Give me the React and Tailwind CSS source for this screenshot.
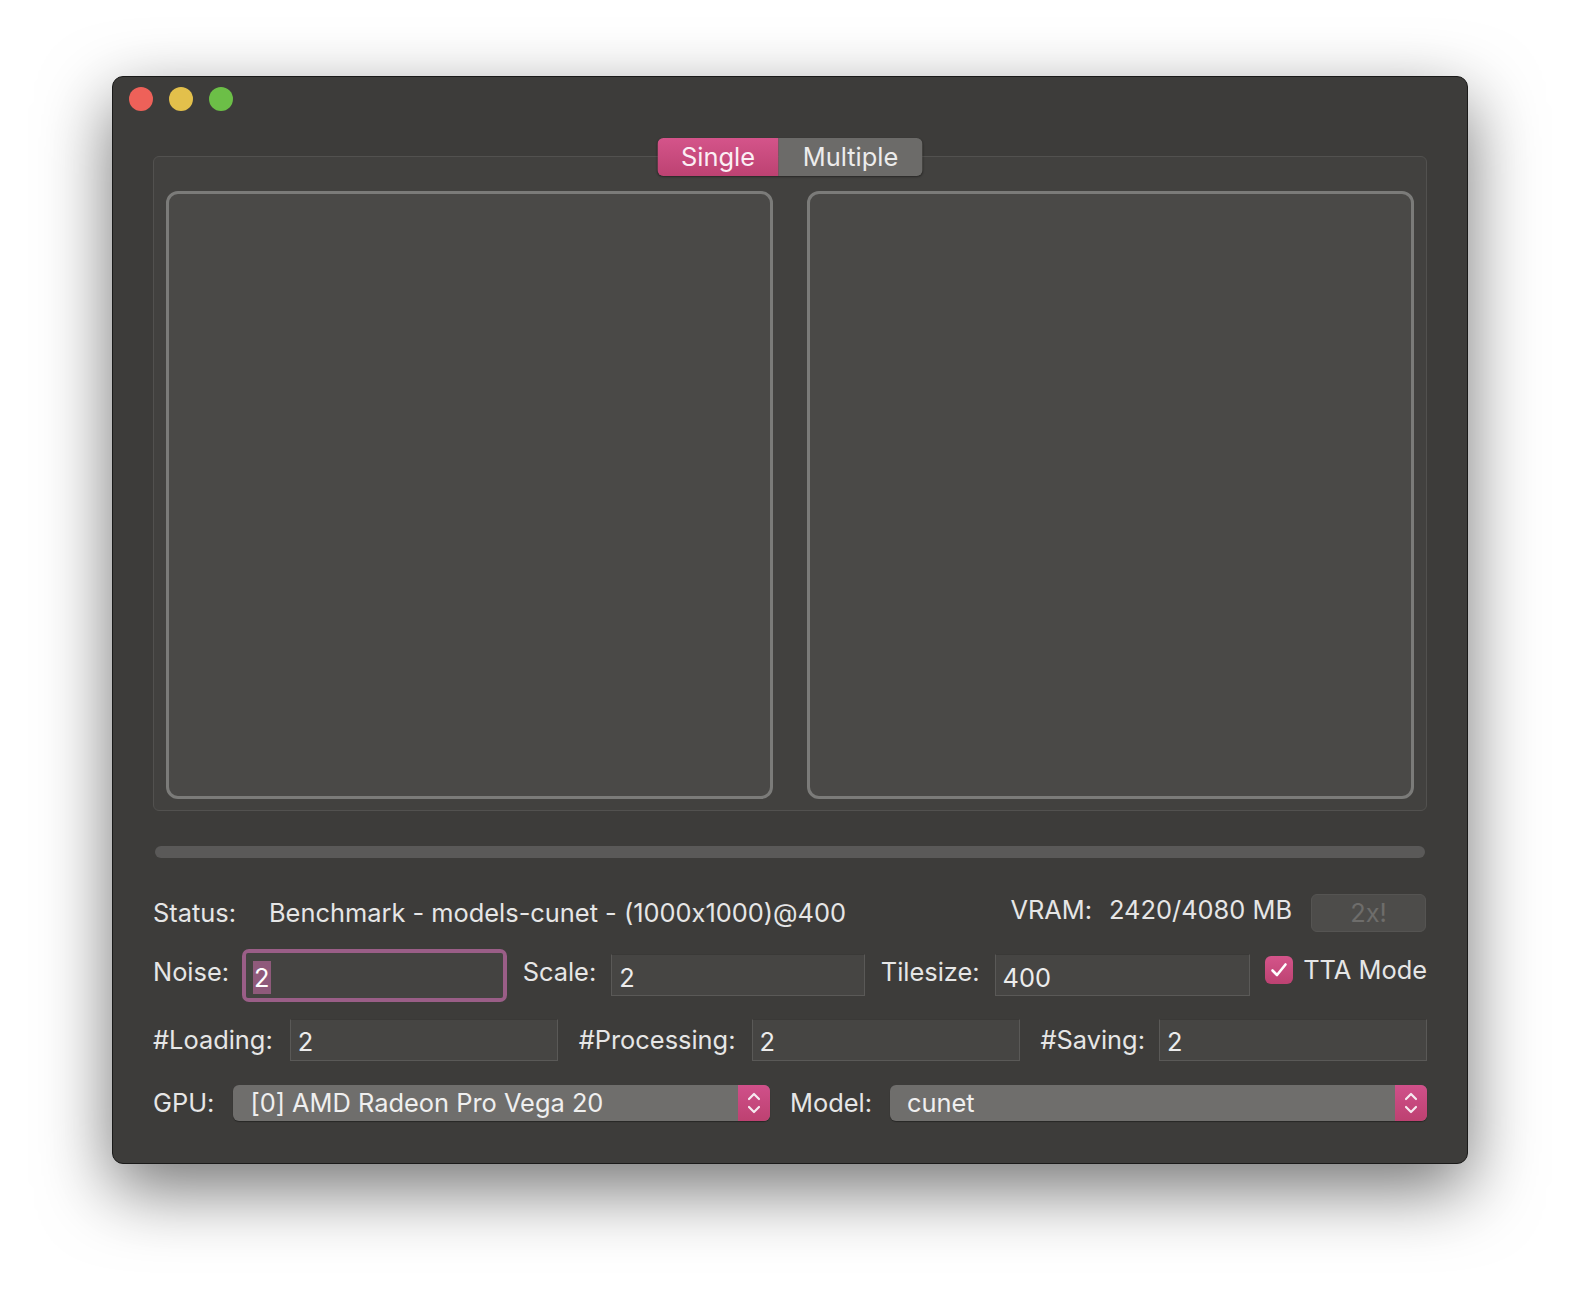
import React from 'react';

const Field = ({ value, width, focused }) => {
  if (focused) {
    return (
      <div className={`${width} h-[53px] rounded-[7px] bg-[#9a5e87] p-[4px]`}>
        <div className="h-full w-full bg-[#444341] rounded-[2px] flex items-center pl-[7px] pt-[4px]">
          <span className="bg-[#8f5a7b] text-white px-[1px] leading-[33px]">{value}</span>
        </div>
      </div>
    );
  }
  return (
    <div className={`${width} h-[42px] bg-[#464543] border border-[#5a5957] border-t-[#3a3937] flex items-center pl-[7px] pt-[6px] text-[#ececec]`}>
      {value}
    </div>
  );
};

const Combo = ({ value }) => (
  <div className="w-[537px] h-[36px] rounded-[6px] bg-[#6f6e6c] flex items-stretch shadow-[0_1px_1px_rgba(0,0,0,0.35)] overflow-hidden">
    <div className="flex-1 flex items-center pl-[17px] text-[#efefef]">{value}</div>
    <div className="w-[32px] bg-gradient-to-b from-[#d0508a] to-[#bd4171] flex items-center justify-center">
      <svg width="14" height="26" viewBox="0 0 14 26" fill="none" stroke="#f6e9f0" strokeWidth="2.2" strokeLinecap="round" strokeLinejoin="round">
        <path d="M2 9 L7 4 L12 9" />
        <path d="M2 17 L7 22 L12 17" />
      </svg>
    </div>
  </div>
);

export default function App() {
  return (
    <div className="min-h-[1312px] w-[1580px] bg-white pl-[112px] pt-[76px] font-['Inter','Liberation_Sans',sans-serif] [font-feature-settings:'calt'_0]">
      <div className="w-[1356px] h-[1088px] bg-[#3d3c3a] rounded-[11px] border border-[#1a1a19] shadow-[0_25px_70px_rgba(0,0,0,0.55)] flex flex-col text-[25.4px] text-[#e6e6e6]">
        {/* title bar */}
        <div className="h-[79px] flex gap-[16px] pl-[16px] pt-[10px]">
          <div className="w-[24px] h-[24px] rounded-full bg-[#ee6159]" />
          <div className="w-[24px] h-[24px] rounded-full bg-[#e3c04b]" />
          <div className="w-[24px] h-[24px] rounded-full bg-[#6cbf47]" />
        </div>

        <div className="px-[40px] flex flex-col">
          {/* group box */}
          <div className="relative h-[655px] rounded-[6px] border border-[#52514f] bg-[#42413f] flex gap-[34px] pt-[34px] px-[12px] pb-[11px]">
            <div className="absolute left-1/2 top-0 -translate-x-1/2 -translate-y-1/2 flex h-[38px] rounded-[6px] overflow-hidden shadow-[0_1px_2px_rgba(0,0,0,0.4)]">
              <div className="w-[121px] bg-gradient-to-b from-[#d4548a] to-[#bd4272] text-[#fbeef4] flex items-center justify-center">Single</div>
              <div className="w-[144px] bg-[#6c6b69] text-[#ececec] flex items-center justify-center">Multiple</div>
            </div>
            <div className="flex-1 rounded-[12px] border-[3px] border-[#7b7b79] bg-[#4a4947]" />
            <div className="flex-1 rounded-[12px] border-[3px] border-[#7b7b79] bg-[#4a4947]" />
          </div>

          {/* progress */}
          <div className="mt-[35px] mx-[2px] h-[12px] rounded-full bg-[#5a5958]" />

          {/* status */}
          <div className="mt-[36px] h-[38px] flex items-center justify-between">
            <div className="flex items-center">
              <span className="w-[116px]">Status:</span>
              <span>Benchmark - models-cunet - (1000x1000)@400</span>
            </div>
            <div className="flex items-center">
              <span className="mr-[17px] -mt-[6px]">VRAM:</span>
              <span className="-mt-[6px]">2420/4080 MB</span>
              <div className="ml-[19px] mr-[1px] w-[115px] h-[38px] rounded-[6px] bg-[#4d4c4a] border border-[#555452] text-[#6e6d6b] flex items-center justify-center">2x!</div>
            </div>
          </div>

          {/* noise row */}
          <div className="mt-[17px] h-[53px] flex items-center justify-between">
            <div className="flex items-center gap-[13px]">
              <span className="pb-[6px]">Noise:</span>
              <Field value="2" width="w-[265px]" focused />
            </div>
            <div className="flex items-center gap-[15px]">
              <span className="pb-[6px]">Scale:</span>
              <Field value="2" width="w-[254px]" />
            </div>
            <div className="flex items-center gap-[15px]">
              <span className="pb-[6px]">Tilesize:</span>
              <Field value="400" width="w-[255px]" />
            </div>
            <div className="flex items-center gap-[10px] -mt-[10px]">
              <div className="w-[28px] h-[28px] rounded-[6px] bg-gradient-to-b from-[#d4548a] to-[#bd4272] flex items-center justify-center">
                <svg width="18" height="16" viewBox="0 0 18 16" fill="none" stroke="#fff" strokeWidth="2.6" strokeLinecap="round" strokeLinejoin="round">
                  <path d="M2.5 8.5 L7 13 L15.5 2.5" />
                </svg>
              </div>
              <span>TTA Mode</span>
            </div>
          </div>

          {/* threads row */}
          <div className="mt-[17px] h-[41px] flex items-center justify-between">
            <div className="flex items-center gap-[17px]">
              <span className="pt-[2px]">#Loading:</span>
              <Field value="2" width="w-[268px]" />
            </div>
            <div className="flex items-center gap-[16px]">
              <span className="pt-[2px]">#Processing:</span>
              <Field value="2" width="w-[268px]" />
            </div>
            <div className="flex items-center gap-[14px]">
              <span className="pt-[2px]">#Saving:</span>
              <Field value="2" width="w-[268px]" />
            </div>
          </div>

          {/* gpu row */}
          <div className="mt-[25px] h-[36px] flex items-center justify-between">
            <div className="flex items-center gap-[19px]">
              <span>GPU:</span>
              <Combo value="[0] AMD Radeon Pro Vega 20" />
            </div>
            <div className="flex items-center gap-[18px]">
              <span>Model:</span>
              <Combo value="cunet" />
            </div>
          </div>
        </div>
      </div>
    </div>
  );
}
